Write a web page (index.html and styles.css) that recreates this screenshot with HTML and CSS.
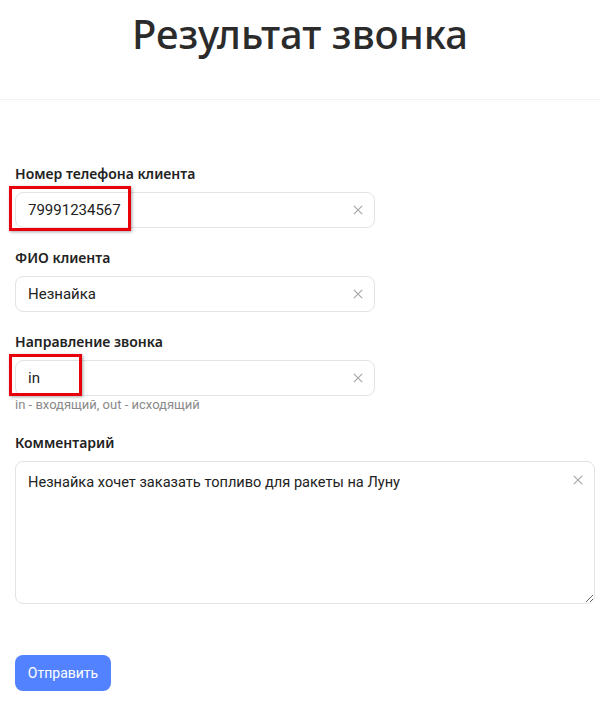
FILE: index.html
```html
<!DOCTYPE html>
<html lang="ru">

<head>
    <meta charset="UTF-8">
    <meta name="viewport" content="width=device-width, initial-scale=1.0">
    <title>Результат звонка</title>
    <link rel="stylesheet" href="styles.css">
</head>

<body>
    <header class="header">
        <h1>Результат звонка</h1>
    </header>

    <form class="call-form">
        <div class="field">
            <label for="phone">Номер телефона клиента</label>
            <div class="input-wrap">
                <input type="text" id="phone" value="79991234567">
                <svg class="clear" viewBox="0 0 12 12"><path d="M1 1L11 11M11 1L1 11" /></svg>
                <span class="mark mark-phone"></span>
            </div>
        </div>

        <div class="field">
            <label for="name">ФИО клиента</label>
            <div class="input-wrap">
                <input type="text" id="name" value="Незнайка">
                <svg class="clear" viewBox="0 0 12 12"><path d="M1 1L11 11M11 1L1 11" /></svg>
            </div>
        </div>

        <div class="field">
            <label for="direction">Направление звонка</label>
            <div class="input-wrap">
                <input type="text" id="direction" value="in">
                <svg class="clear" viewBox="0 0 12 12"><path d="M1 1L11 11M11 1L1 11" /></svg>
                <span class="mark mark-direction"></span>
            </div>
            <p class="hint">in - входящий, out - исходящий</p>
        </div>

        <div class="field">
            <label for="comment">Комментарий</label>
            <div class="input-wrap wide">
                <textarea id="comment">Незнайка хочет заказать топливо для ракеты на Луну</textarea>
                <svg class="clear clear-area" viewBox="0 0 12 12"><path d="M1 1L11 11M11 1L1 11" /></svg>
            </div>
        </div>

        <button type="submit">Отправить</button>
    </form>
</body>

</html>
```

FILE: styles.css
```css
body {
    font-family: "Noto Sans", Arial, sans-serif;
    background-color: #fff;
    color: #222;
    margin: 0;
}

.header {
    height: 99px;
    border-bottom: 1px solid #f2f2f2;
    text-align: center;
}

.header h1 {
    margin: 0;
    padding-top: 6px;
    font-size: 40px;
    font-weight: 500;
    line-height: 56px;
    color: #2b2b2b;
}

.call-form {
    padding: 64px 5px 0 15px;
}

.field {
    margin-bottom: 20px;
}

label {
    display: block;
    margin-bottom: 8px;
    font-size: 14px;
    font-weight: 600;
    line-height: 20px;
    color: #222;
}

.input-wrap {
    position: relative;
    width: 360px;
}

.input-wrap.wide {
    width: 100%;
}

input,
textarea {
    box-sizing: border-box;
    width: 100%;
    height: 36px;
    padding: 0 30px 0 12px;
    border: 1px solid #e3e3e3;
    border-radius: 8px;
    font-family: Roboto, Arial, sans-serif;
    font-size: 15px;
    color: #222;
    outline: none;
    display: block;
}

textarea {
    height: 143px;
    margin-top: 2px;
    padding: 9px 30px 8px 12px;
    font-size: 14.6px;
    line-height: 22px;
    resize: vertical;
}

.clear {
    position: absolute;
    right: 12px;
    top: 13px;
    width: 10px;
    height: 10px;
    fill: none;
    stroke: #a6a6a6;
    stroke-width: 1.4;
}

.clear-area {
    top: 14px;
    right: 12px;
}

.mark {
    position: absolute;
    top: -6px;
    left: -6px;
    height: 45px;
    box-sizing: border-box;
    border: 3px solid #e8000b;
    box-shadow: 1px 1px 3px rgba(0, 0, 0, 0.35);
}

.mark-phone {
    width: 122px;
}

.mark-direction {
    height: 42px;
    width: 73px;
}

.hint {
    margin: 1px 0 0;
    font-family: Roboto, Arial, sans-serif;
    font-size: 13px;
    line-height: 16px;
    color: #8a8a8a;
}

button {
    margin-top: 31px;
    width: 96px;
    height: 36px;
    background-color: #5282ff;
    color: #fff;
    border: none;
    border-radius: 8px;
    font-family: Roboto, Arial, sans-serif;
    font-size: 14px;
    cursor: pointer;
}
```
